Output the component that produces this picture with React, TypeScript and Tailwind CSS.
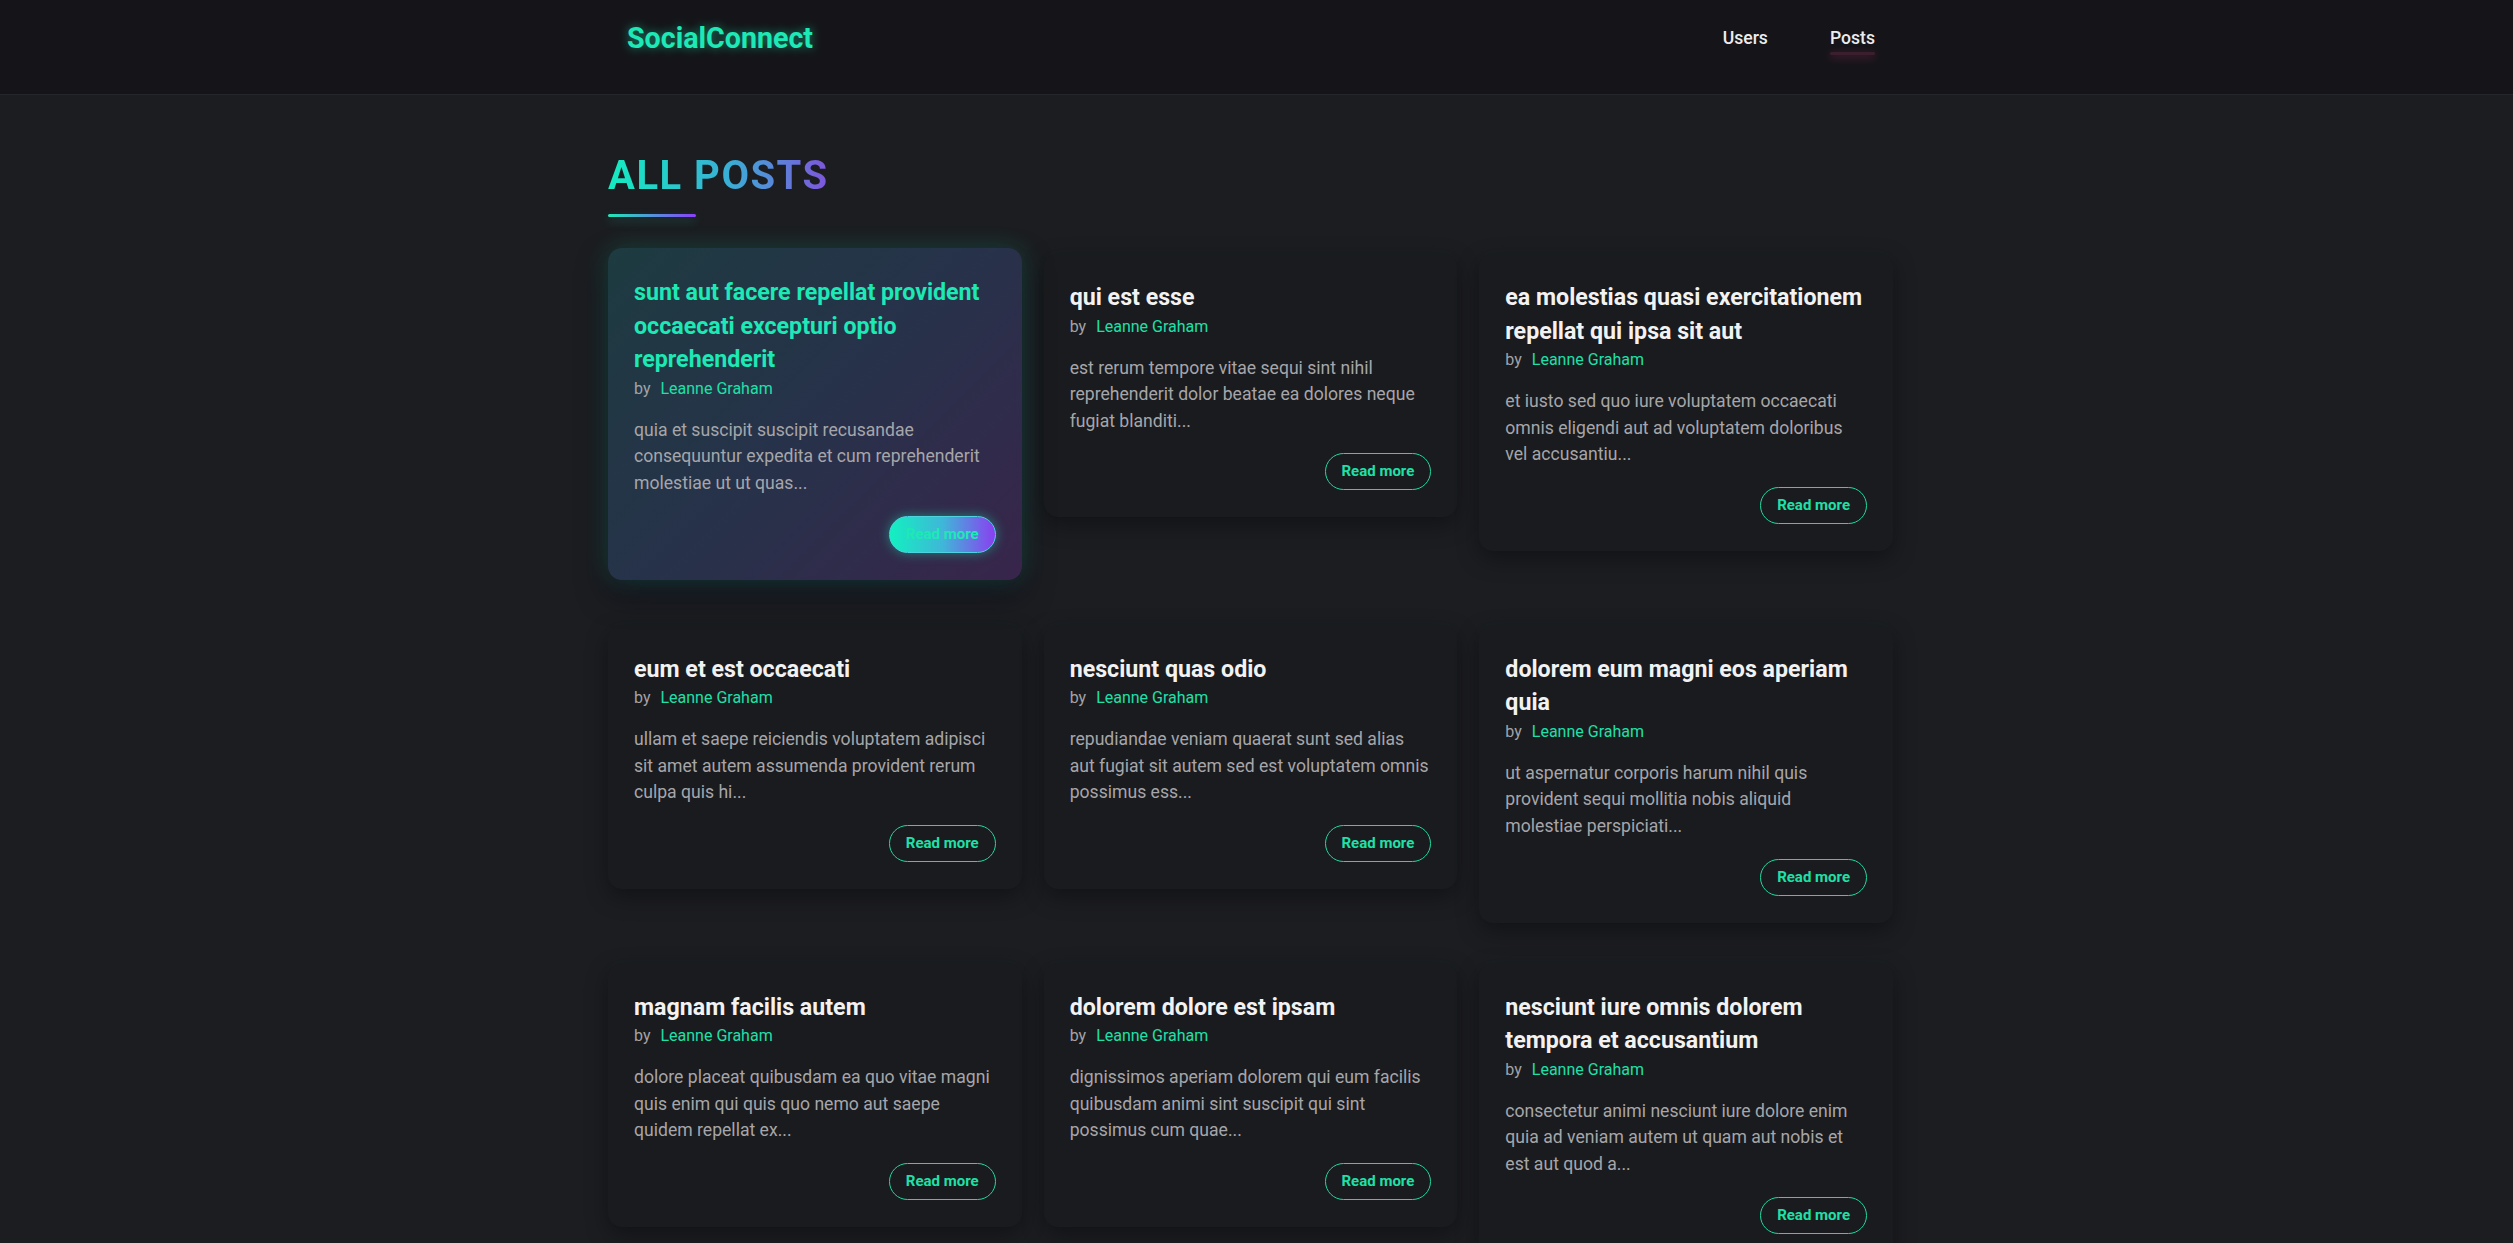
import React from 'react';

type Post = {
  id: number;
  title: string;
  body: string;
};

const posts: Post[] = [
  {
    id: 1,
    title: 'sunt aut facere repellat provident occaecati excepturi optio reprehenderit',
    body: 'quia et suscipit suscipit recusandae consequuntur expedita et cum reprehenderit molestiae ut ut quas...',
  },
  {
    id: 2,
    title: 'qui est esse',
    body: 'est rerum tempore vitae sequi sint nihil reprehenderit dolor beatae ea dolores neque fugiat blanditi...',
  },
  {
    id: 3,
    title: 'ea molestias quasi exercitationem repellat qui ipsa sit aut',
    body: 'et iusto sed quo iure voluptatem occaecati omnis eligendi aut ad voluptatem doloribus vel accusantiu...',
  },
  {
    id: 4,
    title: 'eum et est occaecati',
    body: 'ullam et saepe reiciendis voluptatem adipisci sit amet autem assumenda provident rerum culpa quis hi...',
  },
  {
    id: 5,
    title: 'nesciunt quas odio',
    body: 'repudiandae veniam quaerat sunt sed alias aut fugiat sit autem sed est voluptatem omnis possimus ess...',
  },
  {
    id: 6,
    title: 'dolorem eum magni eos aperiam quia',
    body: 'ut aspernatur corporis harum nihil quis provident sequi mollitia nobis aliquid molestiae perspiciati...',
  },
  {
    id: 7,
    title: 'magnam facilis autem',
    body: 'dolore placeat quibusdam ea quo vitae magni quis enim qui quis quo nemo aut saepe quidem repellat ex...',
  },
  {
    id: 8,
    title: 'dolorem dolore est ipsam',
    body: 'dignissimos aperiam dolorem qui eum facilis quibusdam animi sint suscipit qui sint possimus cum quae...',
  },
  {
    id: 9,
    title: 'nesciunt iure omnis dolorem tempora et accusantium',
    body: 'consectetur animi nesciunt iure dolore enim quia ad veniam autem ut quam aut nobis et est aut quod a...',
  },
];

function PostCard({ post, active }: { post: Post; active?: boolean }) {
  return (
    <article
      className={
        active
          ? 'rounded-[14px] px-[26px] pt-[28px] pb-[27px] bg-[linear-gradient(135deg,#1d3b40_0%,#27324a_50%,#38254b_100%)] -translate-y-[5px] shadow-[0_0_26px_rgba(29,233,182,0.2),0_14px_30px_rgba(10,5,20,0.55)]'
          : 'rounded-[14px] px-[26px] pt-[28px] pb-[27px] bg-[#1a1b1e] shadow-[0_8px_22px_rgba(0,0,0,0.35),0_-3px_10px_rgba(29,233,182,0.025)]'
      }
    >
      <h2
        className={
          active
            ? 'text-[23.2px] leading-[33.6px] font-bold text-[#1de9b6]'
            : 'text-[23.2px] leading-[33.6px] font-bold text-[#f2f2f3]'
        }
      >
        {post.title}
      </h2>
      <p className="text-[16px] leading-[24px] text-[#a3a3a7] mb-[16px]">
        by<span className="ml-[10px] text-[#1fe0a8]">Leanne Graham</span>
      </p>
      <p className="text-[17.6px] leading-[26.6px] text-[#a6a6aa]">{post.body}</p>
      <div className="flex justify-end mt-[19px]">
        <button
          className={
            active
              ? 'rounded-full border border-[#4fd2df] px-4 py-[6px] text-[15px] leading-[23px] font-bold text-[#1de9b6] bg-[linear-gradient(90deg,#12f0c0_0%,#3fb7d8_50%,#8a3ff0_100%)] shadow-[0_0_12px_rgba(29,233,182,0.45)]'
              : 'rounded-full border border-[#1fd9a0] px-4 py-[6px] text-[15px] leading-[23px] font-bold text-[#1fe0a8] bg-transparent'
          }
        >
          Read more
        </button>
      </div>
    </article>
  );
}

export default function App() {
  return (
    <div className="min-h-screen bg-[#1c1d21] font-['Roboto','Noto_Sans',sans-serif]">
      {/* Header */}
      <header className="bg-[#151519] border-b border-[#25262b] h-[95px] flex justify-center pr-3">
        <div className="w-[1285px] pl-[19px] pr-[18px] pt-[16px] flex items-start justify-between">
          <span className="text-[28.6px] leading-[44px] font-bold text-[#1de9b6] [text-shadow:0_0_10px_rgba(29,233,182,0.55)]">
            SocialConnect
          </span>
          <nav className="flex items-start gap-[62px] pt-[9px]">
            <a className="text-[17.6px] leading-[26px] font-medium text-[#ececee]">Users</a>
            <a className="flex flex-col text-[17.6px] leading-[26px] font-medium text-[#ececee]">
              Posts
              <span className="mt-[1px] h-[3px] rounded-full bg-[#3b1f2f] shadow-[0_2px_8px_rgba(255,60,150,0.35)]" />
            </a>
          </nav>
        </div>
      </header>

      {/* Main */}
      <div className="flex justify-center pr-3">
        <main className="w-[1285px] pt-[57px] pb-16">
          <h1 className="text-[40px] leading-[48px] font-bold tracking-[1.5px] bg-[linear-gradient(90deg,#14ecc0_0%,#3aaed6_55%,#7f55dc_100%)] bg-clip-text text-transparent w-fit">
            ALL POSTS
          </h1>
          <div className="mt-[14px] w-[88px] h-[3px] rounded-full bg-[linear-gradient(90deg,#1de9b6,#8a3ffc)] shadow-[0_4px_10px_rgba(29,233,182,0.25)]" />

          <div className="mt-[36px] grid grid-cols-3 gap-x-[22px] gap-y-10 items-start">
            {posts.map((post) => (
              <PostCard key={post.id} post={post} active={post.id === 1} />
            ))}
          </div>
        </main>
      </div>
    </div>
  );
}
